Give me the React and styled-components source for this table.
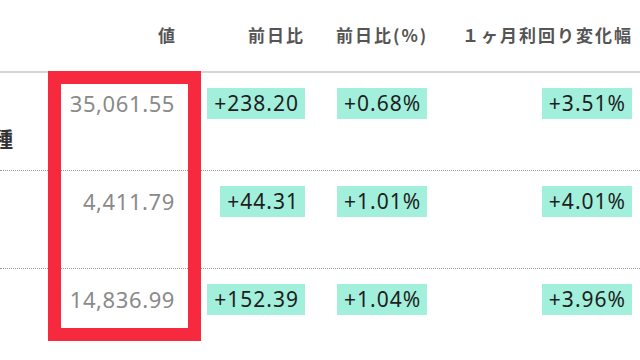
import styled, { createGlobalStyle } from "styled-components";

const Global = createGlobalStyle`
    html, body {
        margin: 0;
        padding: 0;
        background: #ffffff;
        overflow: hidden;
    }
    body {
        font-family: "Noto Sans CJK JP", "Noto Sans", sans-serif;
    }
`

const Page = styled.div`
    position: relative;
    width: 640px;
    height: 360px;
    overflow: hidden;
    background: #ffffff;
`

const Row = styled.div`
    display: grid;
    grid-template-columns: 48px 153px 117px 122px 200px;
    height: ${(p) => p.$height}px;
    align-items: ${(p) => (p.$head ? "center" : "start")};
    border-bottom: ${(p) => p.$border || "none"};
    box-sizing: border-box;
`

const HeadCell = styled.div`
    display: flex;
    justify-content: ${(p) => (p.$left ? "flex-start" : "flex-end")};
    padding: ${(p) => p.$pad};
    padding-bottom: 2px;
    font-size: 17px;
    font-weight: 700;
    letter-spacing: 2px;
    color: #555555;
    white-space: nowrap;
`

const Cell = styled.div`
    display: flex;
    justify-content: ${(p) => (p.$left ? "flex-start" : "flex-end")};
    padding: ${(p) => p.$pad};
    padding-top: 15px;
    white-space: nowrap;
`

const Label = styled.div`
    display: flex;
    justify-content: flex-end;
    overflow: hidden;
    padding-right: 35px;
    padding-top: 50px;
    font-size: 20px;
    font-weight: 700;
    line-height: 31px;
    color: #333333;
    white-space: nowrap;
`

const Value = styled.span`
    font-family: "Noto Sans", sans-serif;
    font-size: 22px;
    line-height: 31px;
    color: #8a8a8a;
    letter-spacing: 0.6px;
`

const Badge = styled.span`
    display: inline-block;
    background: #a2f0dc;
    color: #1e1e1e;
    font-family: "Noto Sans", sans-serif;
    font-size: 21px;
    line-height: 31px;
    padding: 0 6px 0 7px;
    letter-spacing: 1px;
`

const Highlight = styled.div`
    position: absolute;
    left: 48px;
    top: 71px;
    width: 153px;
    height: 270px;
    border: 13px solid #f6293f;
    box-sizing: border-box;
    pointer-events: none;
`

const rows = [
    { label: "日経平均225種", value: "35,061.55", change: "+238.20", pct: "+0.68%", month: "+3.51%" },
    { label: "", value: "4,411.79", change: "+44.31", pct: "+1.01%", month: "+4.01%" },
    { label: "", value: "14,836.99", change: "+152.39", pct: "+1.04%", month: "+3.96%" },
]

function App() {
    return (
        <Page>
            <Global />
            <Row $head $height={73} $border="2px solid #d6d6d6">
                <div />
                <HeadCell $pad="0 24px 0 0">値</HeadCell>
                <HeadCell $pad="0 13px 0 0">前日比</HeadCell>
                <HeadCell $left $pad="0 0 0 18px">前日比(%)</HeadCell>
                <HeadCell $pad="0 7px 0 0">１ヶ月利回り変化幅</HeadCell>
            </Row>
            {rows.map((r, i) => (
                <Row
                    key={i}
                    $height={i === 2 ? 90 : 98}
                    $border={i < 2 ? "1px dotted #9a9a9a" : "none"}
                >
                    <Label>{r.label}</Label>
                    <Cell $pad="0 26px 0 0">
                        <Value>{r.value}</Value>
                    </Cell>
                    <Cell $pad="0 13px 0 0">
                        <Badge>{r.change}</Badge>
                    </Cell>
                    <Cell $left $pad="0 0 0 19px">
                        <Badge>{r.pct}</Badge>
                    </Cell>
                    <Cell $pad="0 8px 0 0">
                        <Badge>{r.month}</Badge>
                    </Cell>
                </Row>
            ))}
            <Highlight />
        </Page>
    )
}

export default App;
